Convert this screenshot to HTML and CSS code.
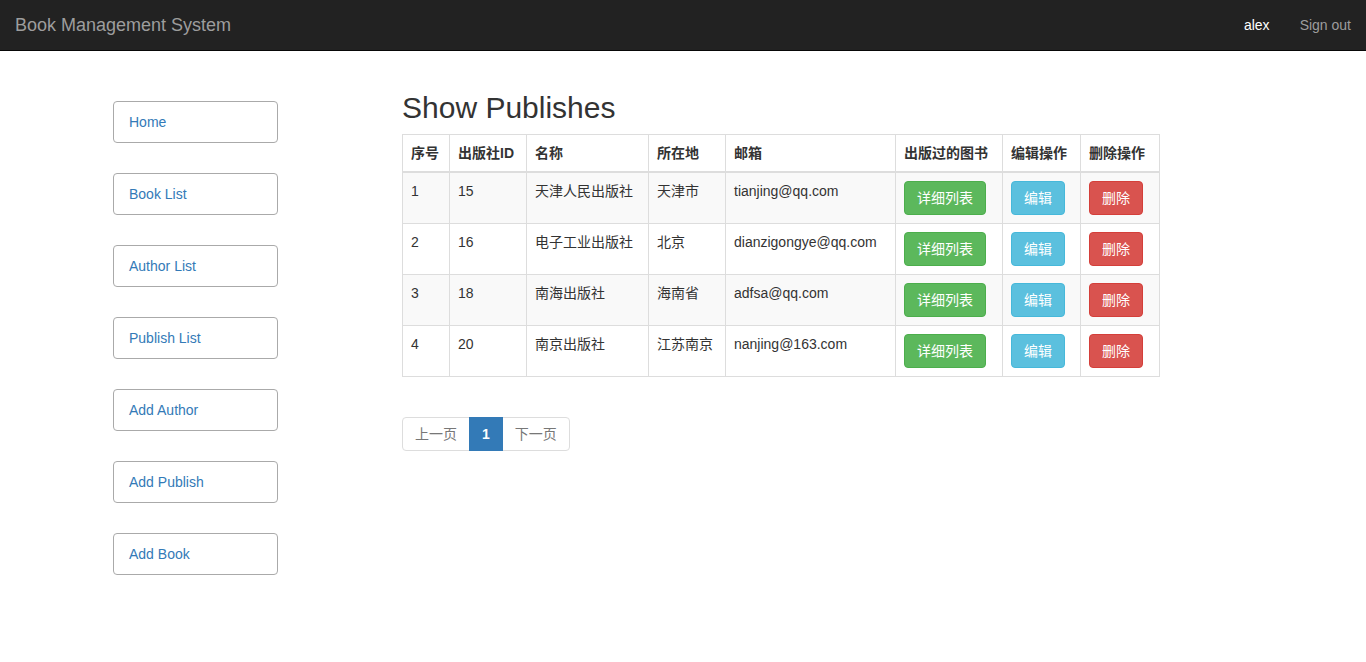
FILE: index.html
```html
<!DOCTYPE html>
<html lang="zh-CN">
<head>
<meta charset="utf-8">
<title>Show Publishes</title>
<link rel="stylesheet" href="styles.css">
</head>
<body>
<nav class="navbar">
  <a class="brand" href="#">Book Management System</a>
  <ul class="nav-right">
    <li><a class="user" href="#">alex</a></li>
    <li><a href="#">Sign out</a></li>
  </ul>
</nav>
<div class="container">
  <aside class="sidebar">
    <a class="side-btn" href="#">Home</a>
    <a class="side-btn" href="#">Book List</a>
    <a class="side-btn" href="#">Author List</a>
    <a class="side-btn" href="#">Publish List</a>
    <a class="side-btn" href="#">Add Author</a>
    <a class="side-btn" href="#">Add Publish</a>
    <a class="side-btn" href="#">Add Book</a>
  </aside>
  <main class="main">
    <h2 class="title">Show Publishes</h2>
    <table class="table">
      <colgroup>
        <col class="c1"><col class="c2"><col class="c3"><col class="c4"><col class="c5"><col class="c6"><col class="c7"><col class="c8">
      </colgroup>
      <thead>
        <tr><th>序号</th><th>出版社ID</th><th>名称</th><th>所在地</th><th>邮箱</th><th>出版过的图书</th><th>编辑操作</th><th>删除操作</th></tr>
      </thead>
      <tbody>
        <tr><td>1</td><td>15</td><td>天津人民出版社</td><td>天津市</td><td>tianjing@qq.com</td><td><a class="btn btn-success" href="#">详细列表</a></td><td><a class="btn btn-info" href="#">编辑</a></td><td><a class="btn btn-danger" href="#">删除</a></td></tr>
        <tr><td>2</td><td>16</td><td>电子工业出版社</td><td>北京</td><td>dianzigongye@qq.com</td><td><a class="btn btn-success" href="#">详细列表</a></td><td><a class="btn btn-info" href="#">编辑</a></td><td><a class="btn btn-danger" href="#">删除</a></td></tr>
        <tr><td>3</td><td>18</td><td>南海出版社</td><td>海南省</td><td>adfsa@qq.com</td><td><a class="btn btn-success" href="#">详细列表</a></td><td><a class="btn btn-info" href="#">编辑</a></td><td><a class="btn btn-danger" href="#">删除</a></td></tr>
        <tr><td>4</td><td>20</td><td>南京出版社</td><td>江苏南京</td><td>nanjing@163.com</td><td><a class="btn btn-success" href="#">详细列表</a></td><td><a class="btn btn-info" href="#">编辑</a></td><td><a class="btn btn-danger" href="#">删除</a></td></tr>
      </tbody>
    </table>
    <ul class="pagination">
      <li><a class="first" href="#">上一页</a></li>
      <li><a class="active" href="#">1</a></li>
      <li><a class="last" href="#">下一页</a></li>
    </ul>
  </main>
</div>
</body>
</html>
```
FILE: styles.css
```css
* { box-sizing: border-box; }
html, body { margin: 0; padding: 0; }
body {
  font-family: "Liberation Sans", Arial, "Noto Sans CJK SC", sans-serif;
  font-size: 14px;
  line-height: 20px;
  color: #333;
  background: #fff;
}
a { text-decoration: none; }

.navbar {
  height: 51px;
  background: #222;
  border-bottom: 1px solid #080808;
  display: flex;
  justify-content: space-between;
  align-items: flex-start;
}
.brand {
  font-size: 18px;
  line-height: 20px;
  padding: 15px;
  color: #9d9d9d;
}
.nav-right {
  list-style: none;
  margin: 0;
  padding: 0;
  display: flex;
}
.nav-right a {
  display: block;
  padding: 15px;
  line-height: 20px;
  color: #9d9d9d;
}
.nav-right a.user { color: #fff; }

.container {
  width: 1140px;
  margin: 20px auto 0;
  display: flex;
}
.sidebar {
  width: 289px;
  flex: none;
  padding-top: 30px;
  display: flex;
  flex-direction: column;
  gap: 30px;
}
.side-btn {
  display: block;
  width: 165px;
  height: 42px;
  padding: 10px 15px;
  border: 1px solid #aaa;
  border-radius: 4px;
  color: #337ab7;
  line-height: 20px;
}

.main { width: 757px; flex: none; }
.title {
  font-size: 30px;
  font-weight: 500;
  line-height: 33px;
  margin: 20px 0 10px;
  color: #333;
}
.table {
  width: 757px;
  table-layout: fixed;
  border-collapse: collapse;
  border-spacing: 0;
  margin-bottom: 20px;
}
.c1 { width: 47px; } .c2 { width: 77px; } .c3 { width: 122px; } .c4 { width: 77px; }
.c5 { width: 170px; } .c6 { width: 107px; } .c7 { width: 78px; } .c8 { width: 79px; }
.table th, .table td {
  padding: 8px;
  border: 1px solid #ddd;
  text-align: left;
  vertical-align: top;
  line-height: 20px;
  white-space: nowrap;
}
.table th {
  font-weight: bold;
  vertical-align: bottom;
  border-bottom-width: 2px;
}
.table tbody tr:nth-child(odd) { background: #f9f9f9; }

.btn {
  display: inline-block;
  padding: 6px 12px;
  border: 1px solid transparent;
  border-radius: 4px;
  color: #fff;
  line-height: 20px;
  font-size: 14px;
}
.btn-success { background: #5cb85c; border-color: #4cae4c; }
.btn-info { background: #5bc0de; border-color: #46b8da; }
.btn-danger { background: #d9534f; border-color: #d43f3a; }

.pagination {
  list-style: none;
  margin: 20px 0;
  padding: 0;
  display: inline-flex;
}
.pagination a {
  display: block;
  padding: 6px 12px;
  line-height: 20px;
  border: 1px solid #ddd;
  margin-left: -1px;
  color: #777;
  background: #fff;
}
.pagination a.first { margin-left: 0; border-radius: 4px 0 0 4px; }
.pagination a.last { border-radius: 0 4px 4px 0; }
.pagination a.active {
  background: #337ab7;
  border-color: #337ab7;
  color: #fff;
  font-weight: bold;
  position: relative;
}
```
